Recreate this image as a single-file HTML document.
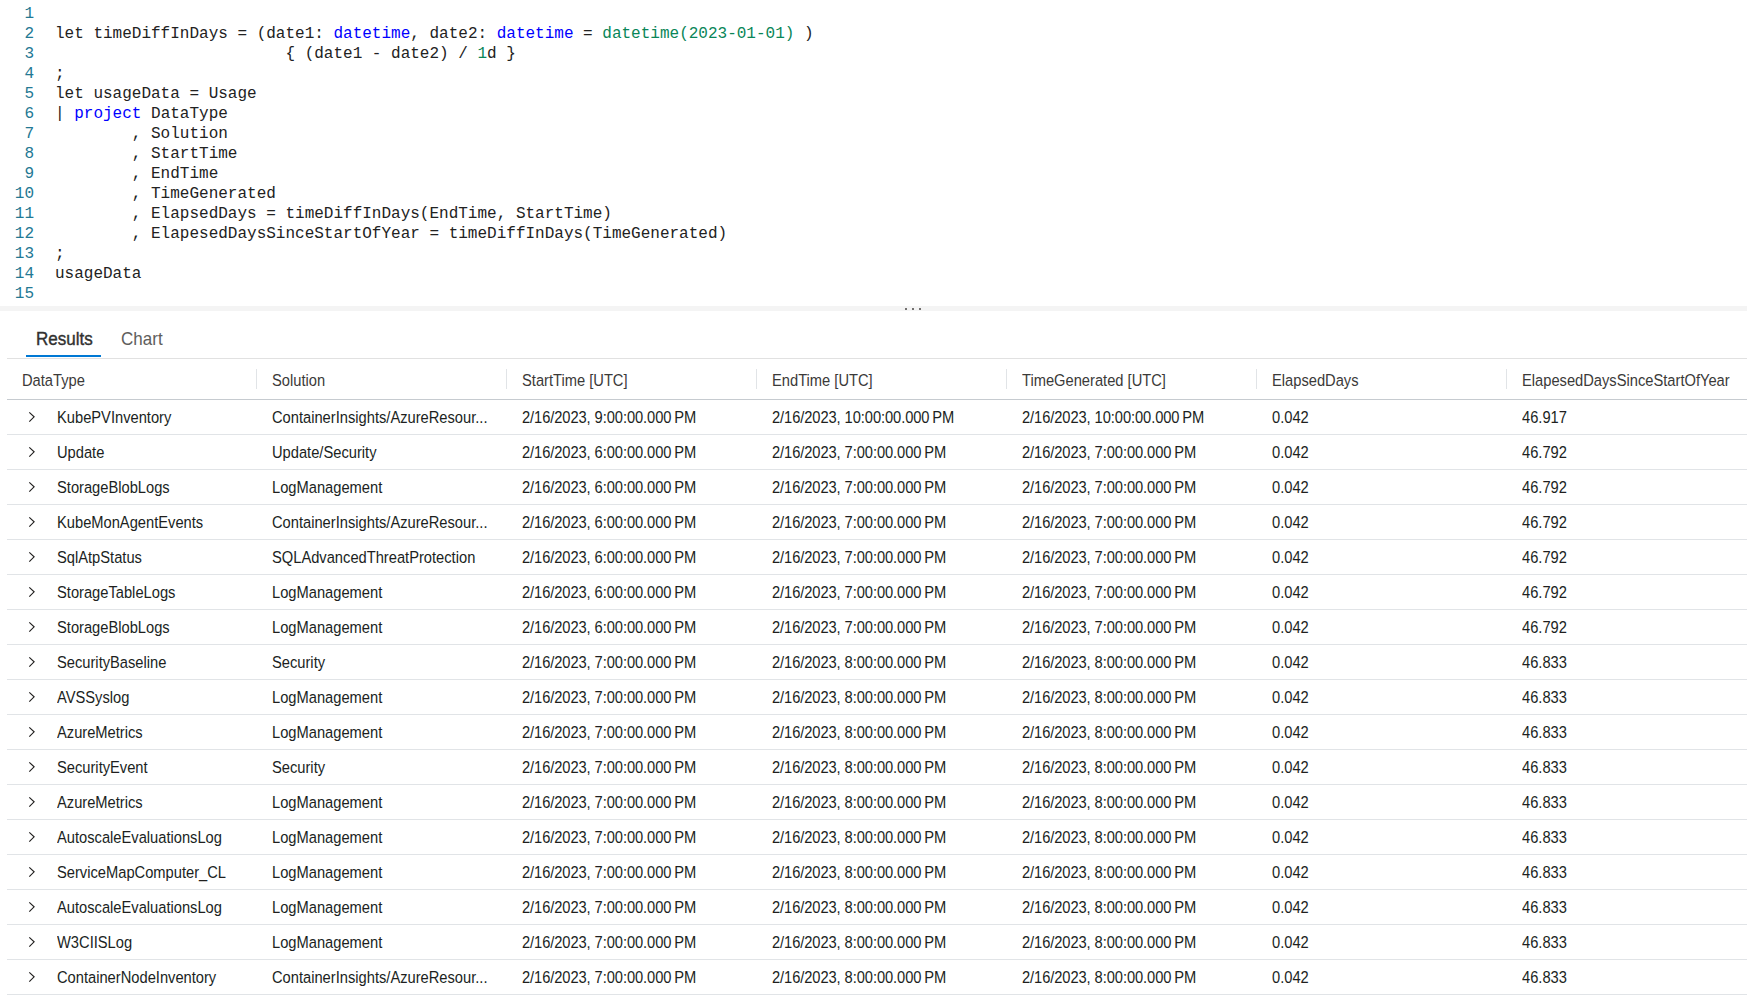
<!DOCTYPE html><html><head><meta charset="utf-8"><style>html,body{margin:0;padding:0;background:#fff;width:1747px;height:995px;overflow:hidden;position:relative}
.editor{position:absolute;left:0;top:0;width:1747px;height:306px;font-family:"Liberation Mono",monospace;font-size:16px}
.ln{position:absolute;left:0;width:34px;text-align:right;height:20px;line-height:20px;color:#237893}
.cl{position:absolute;left:55px;height:20px;line-height:20px;color:#222;white-space:pre}
.k{color:#0000ff}
.g{color:#098658}
.split{position:absolute;left:0;top:306px;width:1747px;height:5px;background:#f4f4f4}
.dot{position:absolute;top:2px;width:2px;height:2px;background:#484644;border-radius:1px}
.tabs{position:absolute;left:0;top:320px;height:38px;font-family:"Liberation Sans",sans-serif;font-size:18.5px}
.tab{position:absolute;top:8px;color:#323130;white-space:nowrap}
.tab b{font-weight:normal;display:inline-block;transform:scaleX(0.92);transform-origin:0 0}
.tab.act{left:36px}
.tab.act b{-webkit-text-stroke:0.4px #323130}
.tab:not(.act){left:121px;color:#605e5c}
.ul{position:absolute;left:26px;top:35px;width:75px;height:2px;background:#0078d4}
.tline{position:absolute;left:7px;top:358px;width:1740px;height:1px;background:#e1e1e1}
.hdr{position:absolute;left:7px;top:359px;width:1740px;height:40px;border-bottom:1px solid #c6cbd0;font-family:"Liberation Sans",sans-serif;font-size:14.7px;color:#3b3a39}
.hc{position:absolute;top:13.6px;white-space:nowrap;transform:scaleY(1.08);transform-origin:0 80%}
.hdiv{position:absolute;top:10px;width:1px;height:20px;background:#e1e4e7}
.row{position:absolute;left:7px;width:1740px;height:34px;border-bottom:1px solid #e1e4e7;font-family:"Liberation Sans",sans-serif;font-size:14.7px;color:#201f1e}
.chev{position:absolute;left:21px;top:10px}
.c{position:absolute;top:10px;white-space:nowrap;transform:scaleY(1.08);transform-origin:0 80%}
.d{letter-spacing:-0.08px}
</style></head><body>
<div class="editor">
<div class="ln" style="top:4px">1</div><div class="cl" style="top:4px"></div>
<div class="ln" style="top:24px">2</div><div class="cl" style="top:24px">let timeDiffInDays = (date1: <span class="k">datetime</span>, date2: <span class="k">datetime</span> = <span class="g">datetime(2023-01-01)</span> )</div>
<div class="ln" style="top:44px">3</div><div class="cl" style="top:44px">                        { (date1 - date2) / <span class="g">1</span>d }</div>
<div class="ln" style="top:64px">4</div><div class="cl" style="top:64px">;</div>
<div class="ln" style="top:84px">5</div><div class="cl" style="top:84px">let usageData = Usage</div>
<div class="ln" style="top:104px">6</div><div class="cl" style="top:104px">| <span class="k">project</span> DataType</div>
<div class="ln" style="top:124px">7</div><div class="cl" style="top:124px">        , Solution</div>
<div class="ln" style="top:144px">8</div><div class="cl" style="top:144px">        , StartTime</div>
<div class="ln" style="top:164px">9</div><div class="cl" style="top:164px">        , EndTime</div>
<div class="ln" style="top:184px">10</div><div class="cl" style="top:184px">        , TimeGenerated</div>
<div class="ln" style="top:204px">11</div><div class="cl" style="top:204px">        , ElapsedDays = timeDiffInDays(EndTime, StartTime)</div>
<div class="ln" style="top:224px">12</div><div class="cl" style="top:224px">        , ElapesedDaysSinceStartOfYear = timeDiffInDays(TimeGenerated)</div>
<div class="ln" style="top:244px">13</div><div class="cl" style="top:244px">;</div>
<div class="ln" style="top:264px">14</div><div class="cl" style="top:264px">usageData</div>
<div class="ln" style="top:284px">15</div><div class="cl" style="top:284px"></div>
</div>
<div class="split"><i class="dot" style="left:905px"></i><i class="dot" style="left:912px"></i><i class="dot" style="left:919px"></i></div>
<div class="tabs"><span class="tab act"><b>Results</b></span><span class="tab"><b>Chart</b></span><div class="ul"></div></div>
<div class="tline"></div>
<div class="hdr">
<div class="hc" style="left:15px">DataType</div>
<div class="hc" style="left:265px">Solution</div>
<div class="hdiv" style="left:249px"></div>
<div class="hc" style="left:515px">StartTime [UTC]</div>
<div class="hdiv" style="left:499px"></div>
<div class="hc" style="left:765px">EndTime [UTC]</div>
<div class="hdiv" style="left:749px"></div>
<div class="hc" style="left:1015px">TimeGenerated [UTC]</div>
<div class="hdiv" style="left:999px"></div>
<div class="hc" style="left:1265px">ElapsedDays</div>
<div class="hdiv" style="left:1249px"></div>
<div class="hc" style="left:1515px">ElapesedDaysSinceStartOfYear</div>
<div class="hdiv" style="left:1499px"></div>
</div>
<div class="row" style="top:400px">
<svg class="chev" width="8" height="14" viewBox="0 0 8 14"><path d="M1.3 2.3 L6.1 6.8 L1.3 11.6" fill="none" stroke="#201f1e" stroke-width="1.15"/></svg>
<div class="c" style="left:50px">KubePVInventory</div>
<div class="c" style="left:265px">ContainerInsights/AzureResour...</div>
<div class="c d" style="left:515px">2/16/2023, 9:00:00.000 PM</div>
<div class="c d" style="left:765px">2/16/2023, 10:00:00.000 PM</div>
<div class="c d" style="left:1015px">2/16/2023, 10:00:00.000 PM</div>
<div class="c" style="left:1265px">0.042</div>
<div class="c" style="left:1515px">46.917</div>
</div>
<div class="row" style="top:435px">
<svg class="chev" width="8" height="14" viewBox="0 0 8 14"><path d="M1.3 2.3 L6.1 6.8 L1.3 11.6" fill="none" stroke="#201f1e" stroke-width="1.15"/></svg>
<div class="c" style="left:50px">Update</div>
<div class="c" style="left:265px">Update/Security</div>
<div class="c d" style="left:515px">2/16/2023, 6:00:00.000 PM</div>
<div class="c d" style="left:765px">2/16/2023, 7:00:00.000 PM</div>
<div class="c d" style="left:1015px">2/16/2023, 7:00:00.000 PM</div>
<div class="c" style="left:1265px">0.042</div>
<div class="c" style="left:1515px">46.792</div>
</div>
<div class="row" style="top:470px">
<svg class="chev" width="8" height="14" viewBox="0 0 8 14"><path d="M1.3 2.3 L6.1 6.8 L1.3 11.6" fill="none" stroke="#201f1e" stroke-width="1.15"/></svg>
<div class="c" style="left:50px">StorageBlobLogs</div>
<div class="c" style="left:265px">LogManagement</div>
<div class="c d" style="left:515px">2/16/2023, 6:00:00.000 PM</div>
<div class="c d" style="left:765px">2/16/2023, 7:00:00.000 PM</div>
<div class="c d" style="left:1015px">2/16/2023, 7:00:00.000 PM</div>
<div class="c" style="left:1265px">0.042</div>
<div class="c" style="left:1515px">46.792</div>
</div>
<div class="row" style="top:505px">
<svg class="chev" width="8" height="14" viewBox="0 0 8 14"><path d="M1.3 2.3 L6.1 6.8 L1.3 11.6" fill="none" stroke="#201f1e" stroke-width="1.15"/></svg>
<div class="c" style="left:50px">KubeMonAgentEvents</div>
<div class="c" style="left:265px">ContainerInsights/AzureResour...</div>
<div class="c d" style="left:515px">2/16/2023, 6:00:00.000 PM</div>
<div class="c d" style="left:765px">2/16/2023, 7:00:00.000 PM</div>
<div class="c d" style="left:1015px">2/16/2023, 7:00:00.000 PM</div>
<div class="c" style="left:1265px">0.042</div>
<div class="c" style="left:1515px">46.792</div>
</div>
<div class="row" style="top:540px">
<svg class="chev" width="8" height="14" viewBox="0 0 8 14"><path d="M1.3 2.3 L6.1 6.8 L1.3 11.6" fill="none" stroke="#201f1e" stroke-width="1.15"/></svg>
<div class="c" style="left:50px">SqlAtpStatus</div>
<div class="c" style="left:265px">SQLAdvancedThreatProtection</div>
<div class="c d" style="left:515px">2/16/2023, 6:00:00.000 PM</div>
<div class="c d" style="left:765px">2/16/2023, 7:00:00.000 PM</div>
<div class="c d" style="left:1015px">2/16/2023, 7:00:00.000 PM</div>
<div class="c" style="left:1265px">0.042</div>
<div class="c" style="left:1515px">46.792</div>
</div>
<div class="row" style="top:575px">
<svg class="chev" width="8" height="14" viewBox="0 0 8 14"><path d="M1.3 2.3 L6.1 6.8 L1.3 11.6" fill="none" stroke="#201f1e" stroke-width="1.15"/></svg>
<div class="c" style="left:50px">StorageTableLogs</div>
<div class="c" style="left:265px">LogManagement</div>
<div class="c d" style="left:515px">2/16/2023, 6:00:00.000 PM</div>
<div class="c d" style="left:765px">2/16/2023, 7:00:00.000 PM</div>
<div class="c d" style="left:1015px">2/16/2023, 7:00:00.000 PM</div>
<div class="c" style="left:1265px">0.042</div>
<div class="c" style="left:1515px">46.792</div>
</div>
<div class="row" style="top:610px">
<svg class="chev" width="8" height="14" viewBox="0 0 8 14"><path d="M1.3 2.3 L6.1 6.8 L1.3 11.6" fill="none" stroke="#201f1e" stroke-width="1.15"/></svg>
<div class="c" style="left:50px">StorageBlobLogs</div>
<div class="c" style="left:265px">LogManagement</div>
<div class="c d" style="left:515px">2/16/2023, 6:00:00.000 PM</div>
<div class="c d" style="left:765px">2/16/2023, 7:00:00.000 PM</div>
<div class="c d" style="left:1015px">2/16/2023, 7:00:00.000 PM</div>
<div class="c" style="left:1265px">0.042</div>
<div class="c" style="left:1515px">46.792</div>
</div>
<div class="row" style="top:645px">
<svg class="chev" width="8" height="14" viewBox="0 0 8 14"><path d="M1.3 2.3 L6.1 6.8 L1.3 11.6" fill="none" stroke="#201f1e" stroke-width="1.15"/></svg>
<div class="c" style="left:50px">SecurityBaseline</div>
<div class="c" style="left:265px">Security</div>
<div class="c d" style="left:515px">2/16/2023, 7:00:00.000 PM</div>
<div class="c d" style="left:765px">2/16/2023, 8:00:00.000 PM</div>
<div class="c d" style="left:1015px">2/16/2023, 8:00:00.000 PM</div>
<div class="c" style="left:1265px">0.042</div>
<div class="c" style="left:1515px">46.833</div>
</div>
<div class="row" style="top:680px">
<svg class="chev" width="8" height="14" viewBox="0 0 8 14"><path d="M1.3 2.3 L6.1 6.8 L1.3 11.6" fill="none" stroke="#201f1e" stroke-width="1.15"/></svg>
<div class="c" style="left:50px">AVSSyslog</div>
<div class="c" style="left:265px">LogManagement</div>
<div class="c d" style="left:515px">2/16/2023, 7:00:00.000 PM</div>
<div class="c d" style="left:765px">2/16/2023, 8:00:00.000 PM</div>
<div class="c d" style="left:1015px">2/16/2023, 8:00:00.000 PM</div>
<div class="c" style="left:1265px">0.042</div>
<div class="c" style="left:1515px">46.833</div>
</div>
<div class="row" style="top:715px">
<svg class="chev" width="8" height="14" viewBox="0 0 8 14"><path d="M1.3 2.3 L6.1 6.8 L1.3 11.6" fill="none" stroke="#201f1e" stroke-width="1.15"/></svg>
<div class="c" style="left:50px">AzureMetrics</div>
<div class="c" style="left:265px">LogManagement</div>
<div class="c d" style="left:515px">2/16/2023, 7:00:00.000 PM</div>
<div class="c d" style="left:765px">2/16/2023, 8:00:00.000 PM</div>
<div class="c d" style="left:1015px">2/16/2023, 8:00:00.000 PM</div>
<div class="c" style="left:1265px">0.042</div>
<div class="c" style="left:1515px">46.833</div>
</div>
<div class="row" style="top:750px">
<svg class="chev" width="8" height="14" viewBox="0 0 8 14"><path d="M1.3 2.3 L6.1 6.8 L1.3 11.6" fill="none" stroke="#201f1e" stroke-width="1.15"/></svg>
<div class="c" style="left:50px">SecurityEvent</div>
<div class="c" style="left:265px">Security</div>
<div class="c d" style="left:515px">2/16/2023, 7:00:00.000 PM</div>
<div class="c d" style="left:765px">2/16/2023, 8:00:00.000 PM</div>
<div class="c d" style="left:1015px">2/16/2023, 8:00:00.000 PM</div>
<div class="c" style="left:1265px">0.042</div>
<div class="c" style="left:1515px">46.833</div>
</div>
<div class="row" style="top:785px">
<svg class="chev" width="8" height="14" viewBox="0 0 8 14"><path d="M1.3 2.3 L6.1 6.8 L1.3 11.6" fill="none" stroke="#201f1e" stroke-width="1.15"/></svg>
<div class="c" style="left:50px">AzureMetrics</div>
<div class="c" style="left:265px">LogManagement</div>
<div class="c d" style="left:515px">2/16/2023, 7:00:00.000 PM</div>
<div class="c d" style="left:765px">2/16/2023, 8:00:00.000 PM</div>
<div class="c d" style="left:1015px">2/16/2023, 8:00:00.000 PM</div>
<div class="c" style="left:1265px">0.042</div>
<div class="c" style="left:1515px">46.833</div>
</div>
<div class="row" style="top:820px">
<svg class="chev" width="8" height="14" viewBox="0 0 8 14"><path d="M1.3 2.3 L6.1 6.8 L1.3 11.6" fill="none" stroke="#201f1e" stroke-width="1.15"/></svg>
<div class="c" style="left:50px">AutoscaleEvaluationsLog</div>
<div class="c" style="left:265px">LogManagement</div>
<div class="c d" style="left:515px">2/16/2023, 7:00:00.000 PM</div>
<div class="c d" style="left:765px">2/16/2023, 8:00:00.000 PM</div>
<div class="c d" style="left:1015px">2/16/2023, 8:00:00.000 PM</div>
<div class="c" style="left:1265px">0.042</div>
<div class="c" style="left:1515px">46.833</div>
</div>
<div class="row" style="top:855px">
<svg class="chev" width="8" height="14" viewBox="0 0 8 14"><path d="M1.3 2.3 L6.1 6.8 L1.3 11.6" fill="none" stroke="#201f1e" stroke-width="1.15"/></svg>
<div class="c" style="left:50px">ServiceMapComputer_CL</div>
<div class="c" style="left:265px">LogManagement</div>
<div class="c d" style="left:515px">2/16/2023, 7:00:00.000 PM</div>
<div class="c d" style="left:765px">2/16/2023, 8:00:00.000 PM</div>
<div class="c d" style="left:1015px">2/16/2023, 8:00:00.000 PM</div>
<div class="c" style="left:1265px">0.042</div>
<div class="c" style="left:1515px">46.833</div>
</div>
<div class="row" style="top:890px">
<svg class="chev" width="8" height="14" viewBox="0 0 8 14"><path d="M1.3 2.3 L6.1 6.8 L1.3 11.6" fill="none" stroke="#201f1e" stroke-width="1.15"/></svg>
<div class="c" style="left:50px">AutoscaleEvaluationsLog</div>
<div class="c" style="left:265px">LogManagement</div>
<div class="c d" style="left:515px">2/16/2023, 7:00:00.000 PM</div>
<div class="c d" style="left:765px">2/16/2023, 8:00:00.000 PM</div>
<div class="c d" style="left:1015px">2/16/2023, 8:00:00.000 PM</div>
<div class="c" style="left:1265px">0.042</div>
<div class="c" style="left:1515px">46.833</div>
</div>
<div class="row" style="top:925px">
<svg class="chev" width="8" height="14" viewBox="0 0 8 14"><path d="M1.3 2.3 L6.1 6.8 L1.3 11.6" fill="none" stroke="#201f1e" stroke-width="1.15"/></svg>
<div class="c" style="left:50px">W3CIISLog</div>
<div class="c" style="left:265px">LogManagement</div>
<div class="c d" style="left:515px">2/16/2023, 7:00:00.000 PM</div>
<div class="c d" style="left:765px">2/16/2023, 8:00:00.000 PM</div>
<div class="c d" style="left:1015px">2/16/2023, 8:00:00.000 PM</div>
<div class="c" style="left:1265px">0.042</div>
<div class="c" style="left:1515px">46.833</div>
</div>
<div class="row" style="top:960px">
<svg class="chev" width="8" height="14" viewBox="0 0 8 14"><path d="M1.3 2.3 L6.1 6.8 L1.3 11.6" fill="none" stroke="#201f1e" stroke-width="1.15"/></svg>
<div class="c" style="left:50px">ContainerNodeInventory</div>
<div class="c" style="left:265px">ContainerInsights/AzureResour...</div>
<div class="c d" style="left:515px">2/16/2023, 7:00:00.000 PM</div>
<div class="c d" style="left:765px">2/16/2023, 8:00:00.000 PM</div>
<div class="c d" style="left:1015px">2/16/2023, 8:00:00.000 PM</div>
<div class="c" style="left:1265px">0.042</div>
<div class="c" style="left:1515px">46.833</div>
</div>
</body></html>
